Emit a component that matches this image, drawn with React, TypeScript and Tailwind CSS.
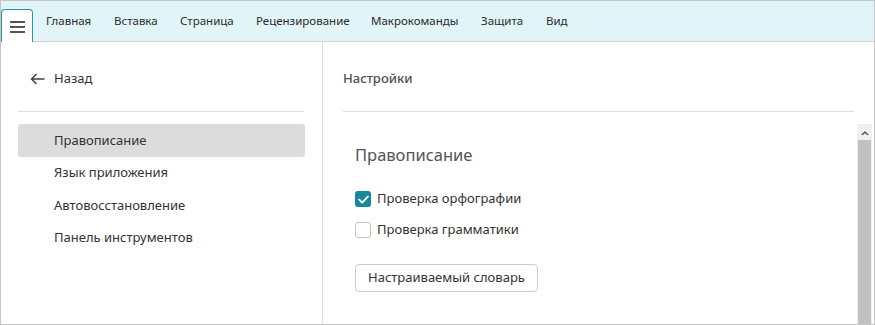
import React from "react";

const tabs: { label: string; w: string }[] = [
  { label: "Главная", w: "w-[68px]" },
  { label: "Вставка", w: "w-[66px]" },
  { label: "Страница", w: "w-[76px]" },
  { label: "Рецензирование", w: "w-[115px]" },
  { label: "Макрокоманды", w: "w-[110px]" },
  { label: "Защита", w: "w-[65px]" },
  { label: "Вид", w: "w-[40px]" },
];

const items = ["Правописание", "Язык приложения", "Автовосстановление", "Панель инструментов"];

export default function App() {
  return (
    <div
      className="w-[875px] h-[325px] border border-[#c6c6c6] bg-white flex flex-col text-[#333333] overflow-hidden"
      style={{ fontFamily: '"Noto Sans", "Open Sans", Arial, sans-serif' }}
    >
      {/* Top bar */}
      <div className="h-[41px] shrink-0 bg-[#e1f4f8] border-b border-[#d2d2d2] flex items-end">
        <div className="relative z-10 -mb-px w-[32px] h-[33px] bg-white border border-b-0 border-[#2a93a6] rounded-t-[4px] flex items-center justify-center">
          <svg width="15" height="12" viewBox="0 0 15 12" className="mt-[1px]">
            <rect x="0" y="0" width="15" height="2" fill="#555555" />
            <rect x="0" y="5" width="15" height="2" fill="#555555" />
            <rect x="0" y="10" width="15" height="2" fill="#555555" />
          </svg>
        </div>
        <div className="flex self-stretch items-center ml-[13px] text-[11.5px] text-[#2b2b2b]">
          {tabs.map((t) => (
            <div key={t.label} className={`${t.w} leading-none`}>
              {t.label}
            </div>
          ))}
        </div>
      </div>

      {/* Body */}
      <div className="flex flex-1 min-h-0">
        {/* Left panel */}
        <div className="w-[322px] shrink-0 border-r border-[#e0e0e0] px-[17px] flex flex-col">
          <div className="mt-[25px] h-[24px] flex items-center pl-[12px]">
            <svg width="15" height="12" viewBox="0 0 15 12" fill="none">
              <path d="M14.5 6H1.5M6.5 1L1.5 6l5 5" stroke="#444" strokeWidth="1.5" />
            </svg>
            <span className="ml-[9px] text-[13px]">Назад</span>
          </div>
          <div className="mt-[20px] h-px bg-[#dcdcdc] mr-[1px]" />
          <div className="mt-[12px] flex flex-col">
            {items.map((it, i) => (
              <div
                key={it}
                className={`h-[32.5px] flex items-center pl-[36px] text-[13px] rounded-[3px] ${
                  i === 0 ? "bg-[#dcdcdd]" : ""
                }`}
              >
                {it}
              </div>
            ))}
          </div>
        </div>

        {/* Right panel */}
        <div className="flex-1 flex flex-col min-w-0 pr-[2px]">
          <div className="pl-[20px] pr-[18px]">
            <div className="mt-[25px] h-[24px] flex items-center text-[13px] font-medium text-[#505050]">
              Настройки
            </div>
            <div className="mt-[20px] h-px bg-[#dcdcdc]" />
          </div>
          <div className="mt-[12px] flex flex-1 min-h-0">
            <div className="flex-1 pl-[32px] flex flex-col items-start">
              <div className="mt-[19px] h-[24px] flex items-center text-[16.5px] text-[#555555]">
                Правописание
              </div>
              <div className="mt-[20px] h-[24px] flex items-center">
                <div className="w-[16px] h-[16px] rounded-[3px] bg-[#17879d] flex items-center justify-center">
                  <svg width="11" height="9" viewBox="0 0 11 9" fill="none">
                    <path d="M1.2 4.6l3 3 5.6-6" stroke="white" strokeWidth="2" strokeLinecap="round" strokeLinejoin="round" />
                  </svg>
                </div>
                <span className="ml-[6px] text-[13px]">Проверка орфографии</span>
              </div>
              <div className="mt-[7px] h-[24px] flex items-center">
                <div className="w-[16px] h-[16px] rounded-[3px] border border-[#c4c4c4] bg-white" />
                <span className="ml-[6px] text-[13px]">Проверка грамматики</span>
              </div>
              <button className="mt-[22px] h-[28px] px-[12px] border border-[#cccccc] rounded-[4px] bg-white text-[13px] text-[#333333]">
                Настраиваемый словарь
              </button>
            </div>
            <div className="w-[15px] flex flex-col">
              <div className="h-[16px] bg-[#f0f0f0] flex items-center justify-center">
                <svg width="8" height="5" viewBox="0 0 8 5">
                  <path d="M0 5L4 1L8 5H6L4 3L2 5Z" fill="#555" />
                </svg>
              </div>
              <div className="flex-1 bg-[#f0f0f0] px-[1px]">
                <div className="h-full bg-[#c1c1c1]" />
              </div>
            </div>
          </div>
        </div>
      </div>
    </div>
  );
}
